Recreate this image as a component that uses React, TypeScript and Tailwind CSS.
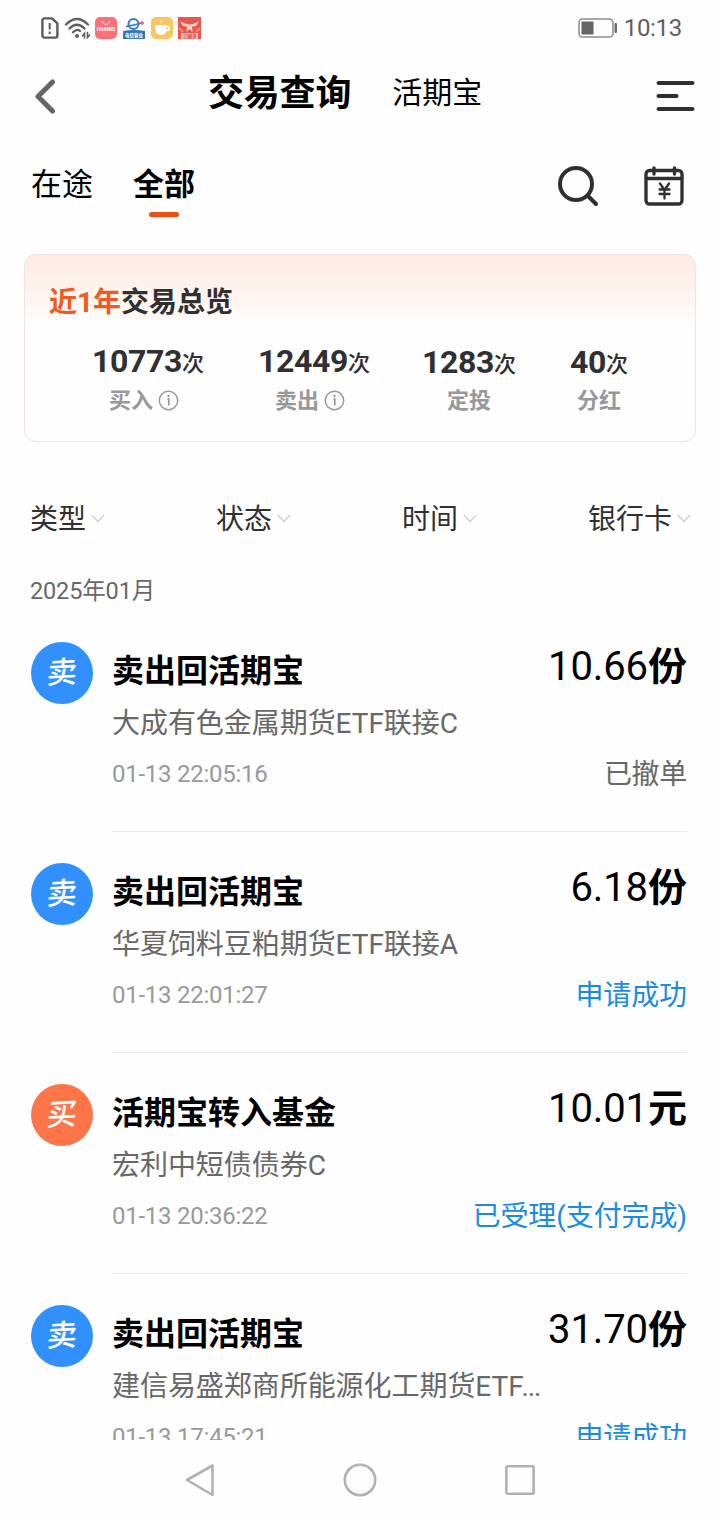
import type { ReactNode } from 'react';

type Trade = {
  kind: '卖' | '买';
  title: string;
  fund: string;
  truncated?: boolean;
  time: string;
  amount: string;
  unit: string;
  status: string;
  muted?: boolean;
};

const trades: Trade[] = [
  { kind: '卖', title: '卖出回活期宝', fund: '大成有色金属期货ETF联接C', time: '01-13 22:05:16', amount: '10.66', unit: '份', status: '已撤单', muted: true },
  { kind: '卖', title: '卖出回活期宝', fund: '华夏饲料豆粕期货ETF联接A', time: '01-13 22:01:27', amount: '6.18', unit: '份', status: '申请成功' },
  { kind: '买', title: '活期宝转入基金', fund: '宏利中短债债券C', time: '01-13 20:36:22', amount: '10.01', unit: '元', status: '已受理(支付完成)' },
  { kind: '卖', title: '卖出回活期宝', fund: '建信易盛郑商所能源化工期货ETF', truncated: true, time: '01-13 17:45:21', amount: '31.70', unit: '份', status: '申请成功' },
];

function StatusBar() {
  return (
    <div className="flex h-14 shrink-0 items-center justify-between pl-[41px] pr-[38px]">
      <div className="flex items-center">
        <svg width="18" height="22" viewBox="0 0 18 22" fill="none" stroke="#5a5a5a" strokeWidth="2.4" strokeLinejoin="round">
          <path d="M3 1.4h8l5.400 5v12.200a2 2 0 0 1-2 2H3.400a2 2 0 0 1-2-2V3.400a2 2 0 0 1 2-2z" />
          <path d="M8.700 6v6.500M8.700 14.500v2.400" strokeWidth="2" />
        </svg>
        <svg className="ml-[5px]" width="27" height="22" viewBox="0 0 27 22" fill="none" stroke="#5f5f5f" strokeWidth="2.300" strokeLinecap="round">
          <path d="M2 7.500Q13 -3.500 24 7.500M5.500 11.500Q13 4 20.500 11.500M9 15.200Q13 11.300 16 14" />
          <circle cx="13" cy="19" r="2" fill="#5f5f5f" stroke="none" />
          <path d="M20.500 21v-4.500l-2 2.300M23.500 15.500v5l2-2.300" strokeWidth="1.600" />
        </svg>
        <div className="ml-1 flex h-[22px] w-[22px] flex-col items-center rounded-[5px] bg-[#fb6f79]">
          <svg width="12" height="10" viewBox="0 0 12 10" fill="none" stroke="#ffd0d4" strokeWidth="1.200"><path d="M2 4Q6 11 10 4" /></svg>
          <span className="text-[5px] font-bold leading-[5px] text-white">HUAWEI</span>
        </div>
        <svg className="ml-[6px]" width="22" height="22" viewBox="0 0 22 22">
          <circle cx="10.500" cy="7" r="5" fill="none" stroke="#3a78cc" strokeWidth="2" />
          <path d="M3 9.500Q11 8.500 18 6" fill="none" stroke="#3a78cc" strokeWidth="1.400" />
          <path d="M17 6h4M19 4v4" stroke="#ee5670" strokeWidth="1.500" />
          <path d="M0 14Q11 12 22 14V22H0z" fill="#3a74ad" />
          <text x="11" y="19.800" textAnchor="middle" fontSize="5" fontWeight="bold" fill="#fff" textLength="18" lengthAdjust="spacingAndGlyphs">电信营业</text>
        </svg>
        <svg className="ml-[6px]" width="22" height="22" viewBox="0 0 22 22">
          <rect width="22" height="22" rx="5" fill="#fac564" />
          <path d="M4.500 8h11v4.500a5.500 5.500 0 0 1-11 0z" fill="#fff" />
          <path d="M15 9.500h1.200a2 2 0 0 1 0 4H15" fill="none" stroke="#fff" strokeWidth="1.500" />
          <path d="M10 3.500v2" stroke="#fff" strokeWidth="1.400" />
        </svg>
        <svg className="ml-[5px]" width="23" height="22" viewBox="0 0 23 22">
          <rect width="23" height="22" fill="#e8564f" />
          <path d="M2 4.500l6.500 2.500 3 .5L14.500 7 21 4.500 18 9l-4 .5.500 5.500-3-3-3 3 .5-5.500L5 9z" fill="#fbd5cb" />
          <path d="M1 11l4 4M22 11l-4 4" stroke="#f39a8a" strokeWidth="1.500" />
          <rect x="3" y="16" width="17" height="6" fill="#fbc9c0" />
          <text x="11.500" y="20.800" textAnchor="middle" fontSize="5" fontWeight="bold" fill="#dc3d36" textLength="15">三国杀</text>
        </svg>
      </div>
      <div className="flex items-center">
        <svg width="40" height="20" viewBox="0 0 40 20">
          <rect x="1" y="1" width="34" height="18" rx="3.500" fill="none" stroke="#8c8c8c" strokeWidth="1.500" />
          <rect x="3.500" y="3.500" width="12" height="13" fill="#626562" />
          <rect x="36.500" y="5" width="2.500" height="10" rx="1" fill="#6c6c6c" />
        </svg>
        <span className="ml-[6px] text-[24px] leading-none tracking-[-0.3px] text-[#606060]">10:13</span>
      </div>
    </div>
  );
}

function Header() {
  return (
    <header className="flex h-20 shrink-0 items-center pl-[33px] pr-[25px]">
      <svg width="24" height="36" viewBox="0 0 24 36" fill="none" stroke="#666" strokeWidth="5" strokeLinecap="round">
        <path d="M19.500 4L5 18.500L19.500 33" strokeLinejoin="round" />
      </svg>
      <h1 className="-mt-1 ml-[151px] text-[36px] font-bold leading-[44px] tracking-[-0.2px] text-black">交易查询</h1>
      <span className="-mt-[6px] ml-[41px] text-[30px] leading-[44px] text-black">活期宝</span>
      <svg className="ml-auto" width="40" height="32" viewBox="0 0 40 32" stroke="#2f2f2f" strokeWidth="4" strokeLinecap="round">
        <path d="M3.500 3h34M3.500 16h18M3.500 29h34" />
      </svg>
    </header>
  );
}

function Tabs() {
  return (
    <div className="flex h-[118px] shrink-0 items-start pl-[31px] pr-[35px] pt-[26px]">
      <span className="text-[31px] leading-[46px] text-black">在途</span>
      <div className="ml-10 flex flex-col items-center">
        <span className="text-[31px] font-bold leading-[46px] text-black">全部</span>
        <span className="mt-1 h-[5px] w-[30px] rounded-full bg-[#ea4f14]" />
      </div>
      <svg className="ml-auto mt-[3px]" width="42" height="42" viewBox="0 0 42 42" fill="none" stroke="#2f2f2f" strokeWidth="4" strokeLinecap="round">
        <circle cx="19" cy="19" r="16" />
        <path d="M31 31l8 8" />
      </svg>
      <svg className="ml-11 mt-[3px]" width="42" height="42" viewBox="0 0 42 42" fill="none" stroke="#2f2f2f" strokeWidth="3.300" strokeLinecap="round" strokeLinejoin="round">
        <rect x="3" y="5.500" width="36" height="33.500" rx="3.500" />
        <path d="M3 13.500h36M11 3v6M31.500 3v6" />
        <path d="M17 18.500l4.500 6.500l4.500-6.500M21.500 25v8.500M16.500 24.500h10M16.500 29h10" strokeWidth="2.300" />
      </svg>
    </div>
  );
}

function Stat({ value, label, info, className }: { value: string; label: string; info?: boolean; className: string }) {
  return (
    <div className={`flex flex-col items-center ${className}`}>
      <div className={`flex h-10 items-baseline whitespace-nowrap font-bold leading-[40px] text-[#303030] ${info ? '' : 'relative top-px'}`}>
        <span className="text-[32px] tracking-[-0.4px]">{value}</span>
        <span className="relative -top-px text-[22px] font-medium">次</span>
      </div>
      <div className={`mt-1 flex items-center text-[22px] font-bold leading-[32px] text-[#989898] ${info ? '-ml-2' : ''}`}>
        {label}
        {info && (
          <svg className="-mt-px ml-[5px]" width="21" height="21" viewBox="0 0 21 21" fill="none" stroke="#999" strokeWidth="1.500">
            <circle cx="10.500" cy="10.500" r="9.200" />
            <path d="M9.300 9h1.500v6.500" strokeWidth="1.700" />
            <circle cx="10.500" cy="6" r="1.200" fill="#999" stroke="none" />
          </svg>
        )}
      </div>
    </div>
  );
}

function Overview() {
  return (
    <section className="mx-6 flex h-[188px] shrink-0 flex-col rounded-xl border border-[#eee4e0] bg-linear-to-b from-[#ffebe2] via-[#fff6f3] via-25% to-[#fefefe] to-40% pt-[28px]">
      <h2 className="pl-6 text-[28px] font-bold leading-[40px] text-[#303030]">
        <span className="text-[#ed5b20]">近1年</span>交易总览
      </h2>
      <div className="mt-[18px] flex">
        <Stat value="10773" label="买入" info className="ml-[66px] w-[114px]" />
        <Stat value="12449" label="卖出" info className="ml-[52px] w-[114px]" />
        <Stat value="1283" label="定投" className="ml-[49px] w-[98px]" />
        <Stat value="40" label="分红" className="ml-[51px] w-[60px]" />
      </div>
    </section>
  );
}

function Filter({ children }: { children: ReactNode }) {
  return (
    <div className="flex items-center text-[28px] leading-[40px] text-[#303030]">
      {children}
      <svg className="-mt-[3px] ml-[5px]" width="14" height="9" viewBox="0 0 14 9" fill="none" stroke="#d2d2d2" strokeWidth="1.600">
        <path d="M1 1l6 6.500L13 1" />
      </svg>
    </div>
  );
}

function TradeRow({ trade }: { trade: Trade }) {
  return (
    <li className="flex h-[221px] shrink-0 pl-[31px] pr-[33px]">
      <div className={`mt-[31px] flex h-[62px] w-[62px] shrink-0 items-center justify-center rounded-full ${trade.kind === '卖' ? 'bg-[#3190fc]' : 'bg-[#fd7548]'}`}>
        <span className="-rotate-3 -skew-x-8 text-[30px] font-medium leading-none text-white">{trade.kind}</span>
      </div>
      <div className="ml-[19px] flex grow flex-col border-b border-[#ececec] pt-9">
        <div className="flex h-[48px] items-center justify-between">
          <span className="text-[32px] font-bold leading-[48px] text-black">{trade.title}</span>
          <div className="-mt-2 flex items-baseline leading-[48px] text-black">
            <span className="text-[40px] tracking-[-0.1px]">{trade.amount}</span>
            <span className="text-[39px] font-bold">{trade.unit}</span>
          </div>
        </div>
        <span className="mt-[5px] text-[28px] leading-[48px] tracking-[-0.05px] text-[#686868]">
          {trade.fund}
          {trade.truncated && <span className="-ml-[2px] tracking-[-1.200px]">...</span>}
        </span>
        <div className="mt-[2px] flex h-[48px] items-center justify-between">
          <span className="text-[24px] leading-[48px] tracking-[-0.25px] text-[#999]">{trade.time}</span>
          <span className={`mt-[2px] text-[28px] leading-[48px] ${trade.muted ? 'text-[#686868] tracking-[-0.3px]' : 'tracking-[-0.1px] text-[#1a8be0]'}`}>{trade.status}</span>
        </div>
      </div>
    </li>
  );
}

function NavBar() {
  return (
    <nav className="flex h-20 shrink-0 items-center justify-between bg-[#fefefe] px-[184px]">
      <svg width="32" height="36" viewBox="0 0 32 36" fill="none" stroke="#b2b2b2" strokeWidth="2.600" strokeLinejoin="round">
        <path d="M28.500 3.500v29.500L3 18z" />
      </svg>
      <svg width="36" height="36" viewBox="0 0 36 36" fill="none" stroke="#b2b2b2" strokeWidth="2.600">
        <circle cx="18" cy="18" r="15.200" />
      </svg>
      <svg width="32" height="32" viewBox="0 0 32 32" fill="none" stroke="#b2b2b2" strokeWidth="2.600">
        <rect x="2.300" y="2.300" width="27.400" height="27.400" rx="1.500" />
      </svg>
    </nav>
  );
}

export default function App() {
  return (
    <div className="flex h-[1520px] w-[720px] flex-col overflow-hidden bg-[#fefefe] font-['Roboto','Noto_Sans_CJK_SC',sans-serif]">
      <StatusBar />
      <Header />
      <Tabs />
      <main className="flex min-h-0 grow flex-col overflow-hidden">
        <Overview />
        <div className="mt-[58px] flex h-10 shrink-0 items-center justify-between pl-[30px] pr-[29px]">
          <Filter>类型</Filter>
          <Filter>状态</Filter>
          <Filter>时间</Filter>
          <Filter>银行卡</Filter>
        </div>
        <div className="mt-[33px] h-[36px] shrink-0 pl-[30px] text-[23.500px] leading-[36px] tracking-[-0.15px] text-[#686868]">2025年01月</div>
        <ul className="flex shrink-0 flex-col pt-[2px]">
          {trades.map((trade) => (
            <TradeRow key={trade.time} trade={trade} />
          ))}
        </ul>
      </main>
      <NavBar />
    </div>
  );
}
